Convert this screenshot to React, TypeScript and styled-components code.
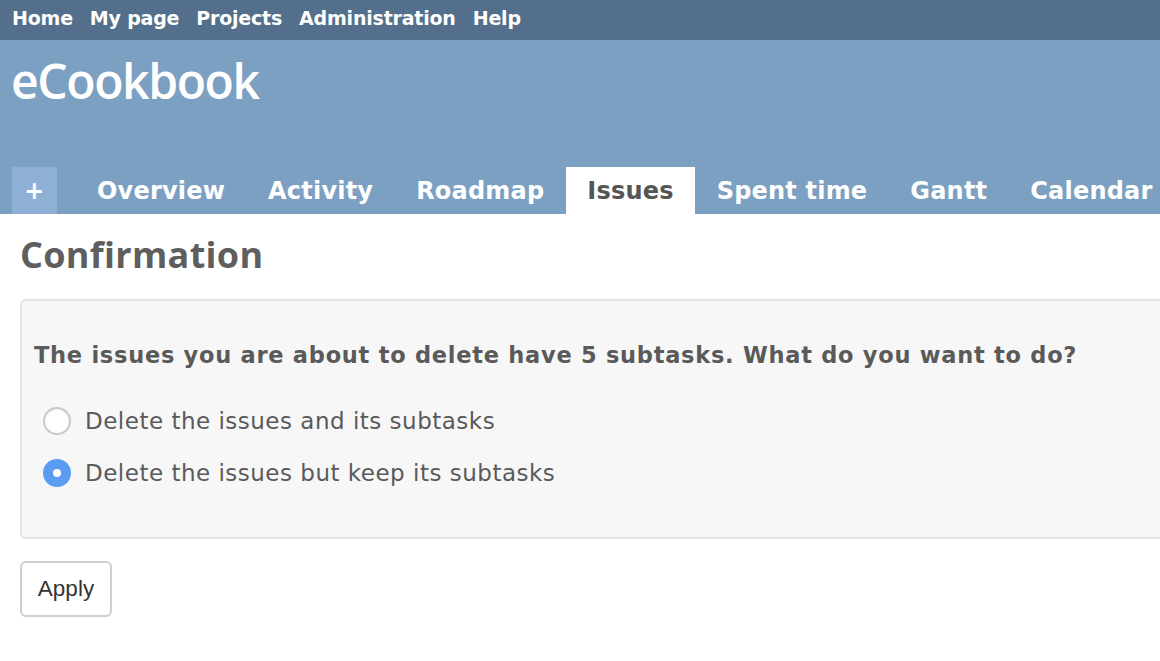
import React, { useState } from "react";
import styled, { createGlobalStyle } from "styled-components";

const Global = createGlobalStyle`
  html, body { margin: 0; padding: 0; background: #fff; overflow: hidden; }
  body { font-family: "DejaVu Sans", Verdana, sans-serif; color: #555; }
`;

const TopMenu = styled.nav`
  height: 40px;
  box-sizing: border-box;
  background: #536f8b;
  display: flex;
  align-items: center;
  padding: 0 0 5px 12px;
  gap: 17px;
`;

const TopLink = styled.a`
  color: #fff;
  font-weight: bold;
  font-size: 19px;
  text-decoration: none;
  letter-spacing: -0.2px;
`;

const Header = styled.header`
  height: 174px;
  background: #7ca0c2;
  display: flex;
  flex-direction: column;
  justify-content: space-between;
  overflow: hidden;
`;

const Title = styled.h1`
  margin: 0;
  padding: 13px 0 0 11px;
  color: #fff;
  font-family: "Open Sans", "Noto Sans", sans-serif;
  font-weight: 600;
  font-size: 48px;
  line-height: 56px;
  letter-spacing: -1.4px;
`;

const Tabs = styled.ul`
  list-style: none;
  margin: 0;
  padding: 0 0 0 12px;
  display: flex;
  align-items: stretch;
  height: 47px;
  gap: 1px;
`;

const Tab = styled.li<{ $selected?: boolean; $plus?: boolean }>`
  display: flex;
  align-items: center;
  justify-content: center;
  flex: none;
  white-space: nowrap;
  padding: ${(p) => (p.$plus ? "0" : "0 21px")};
  width: ${(p) => (p.$plus ? "45px" : "auto")};
  margin-right: ${(p) => (p.$plus ? "18px" : "0")};
  background: ${(p) => (p.$selected ? "#fff" : p.$plus ? "#8fb0d5" : "transparent")};
  color: ${(p) => (p.$selected ? "#555" : "#fff")};
  font-weight: bold;
  font-size: 24px;
  letter-spacing: 0.2px;
`;

const Content = styled.main`
  padding: 0 0 0 20px;
`;

const Heading = styled.h2`
  margin: 0;
  padding: 19px 0 0 0;
  font-family: "Open Sans", "Noto Sans", sans-serif;
  font-weight: 700;
  font-size: 36px;
  line-height: 44px;
  color: #5e5e5e;
  letter-spacing: 0.3px;
`;

const Box = styled.div`
  margin-top: 22px;
  background: #f7f7f7;
  border: 2px solid #e4e4e4;
  border-right: none;
  border-radius: 6px 0 0 6px;
  height: 240px;
  box-sizing: border-box;
  padding: 40px 0 0 12px;
  display: flex;
  flex-direction: column;
`;

const Question = styled.p`
  margin: 0;
  font-weight: bold;
  font-size: 22.5px;
  line-height: 28px;
  letter-spacing: 0.74px;
  color: #5a5a5a;
  white-space: nowrap;
`;

const Options = styled.div`
  margin-top: 38px;
  display: flex;
  flex-direction: column;
  gap: 24px;
`;

const Option = styled.label`
  display: flex;
  align-items: center;
  gap: 14px;
  padding-left: 9px;
  font-size: 23px;
  line-height: 28px;
  letter-spacing: 0.5px;
  color: #5a5a5a;
  cursor: pointer;
`;

const RadioCircle = styled.span<{ $checked: boolean }>`
  width: 28px;
  height: 28px;
  box-sizing: border-box;
  border-radius: 50%;
  flex: none;
  display: flex;
  align-items: center;
  justify-content: center;
  background: ${(p) => (p.$checked ? "#5b9df2" : "#fff")};
  border: ${(p) => (p.$checked ? "none" : "2px solid #c9c9c9")};
  box-shadow: ${(p) => (p.$checked ? "none" : "inset 0 1px 2px rgba(0,0,0,0.08)")};
  &::after {
    content: "";
    display: ${(p) => (p.$checked ? "block" : "none")};
    width: 8px;
    height: 8px;
    border-radius: 50%;
    background: #fff;
  }
`;

const HiddenInput = styled.input`
  display: none;
`;

const ApplyButton = styled.button`
  margin-top: 22px;
  width: 92px;
  height: 56px;
  background: #fff;
  border: 2px solid #cfcfcf;
  border-radius: 6px;
  font-family: "Liberation Sans", Arial, sans-serif;
  font-size: 22.5px;
  color: #333;
  padding: 0;
`;

const menu = ["Home", "My page", "Projects", "Administration", "Help"];
const tabs = ["Overview", "Activity", "Roadmap", "Issues", "Spent time", "Gantt", "Calendar"];

export default function App() {
  const [choice, setChoice] = useState("nullify");
  const options = [
    { value: "destroy", label: "Delete the issues and its subtasks" },
    { value: "nullify", label: "Delete the issues but keep its subtasks" },
  ];
  return (
    <>
      <Global />
      <TopMenu>
        {menu.map((m) => (
          <TopLink key={m} href="#">
            {m}
          </TopLink>
        ))}
      </TopMenu>
      <Header>
        <Title>eCookbook</Title>
        <Tabs>
          <Tab $plus>+</Tab>
          {tabs.map((t) => (
            <Tab key={t} $selected={t === "Issues"}>
              {t}
            </Tab>
          ))}
        </Tabs>
      </Header>
      <Content>
        <Heading>Confirmation</Heading>
        <Box>
          <Question>
            The issues you are about to delete have 5 subtasks. What do you want to do?
          </Question>
          <Options>
            {options.map((o) => (
              <Option key={o.value}>
                <HiddenInput
                  type="radio"
                  name="todo"
                  value={o.value}
                  checked={choice === o.value}
                  onChange={() => setChoice(o.value)}
                />
                <RadioCircle $checked={choice === o.value} />
                {o.label}
              </Option>
            ))}
          </Options>
        </Box>
        <ApplyButton>Apply</ApplyButton>
      </Content>
    </>
  );
}
